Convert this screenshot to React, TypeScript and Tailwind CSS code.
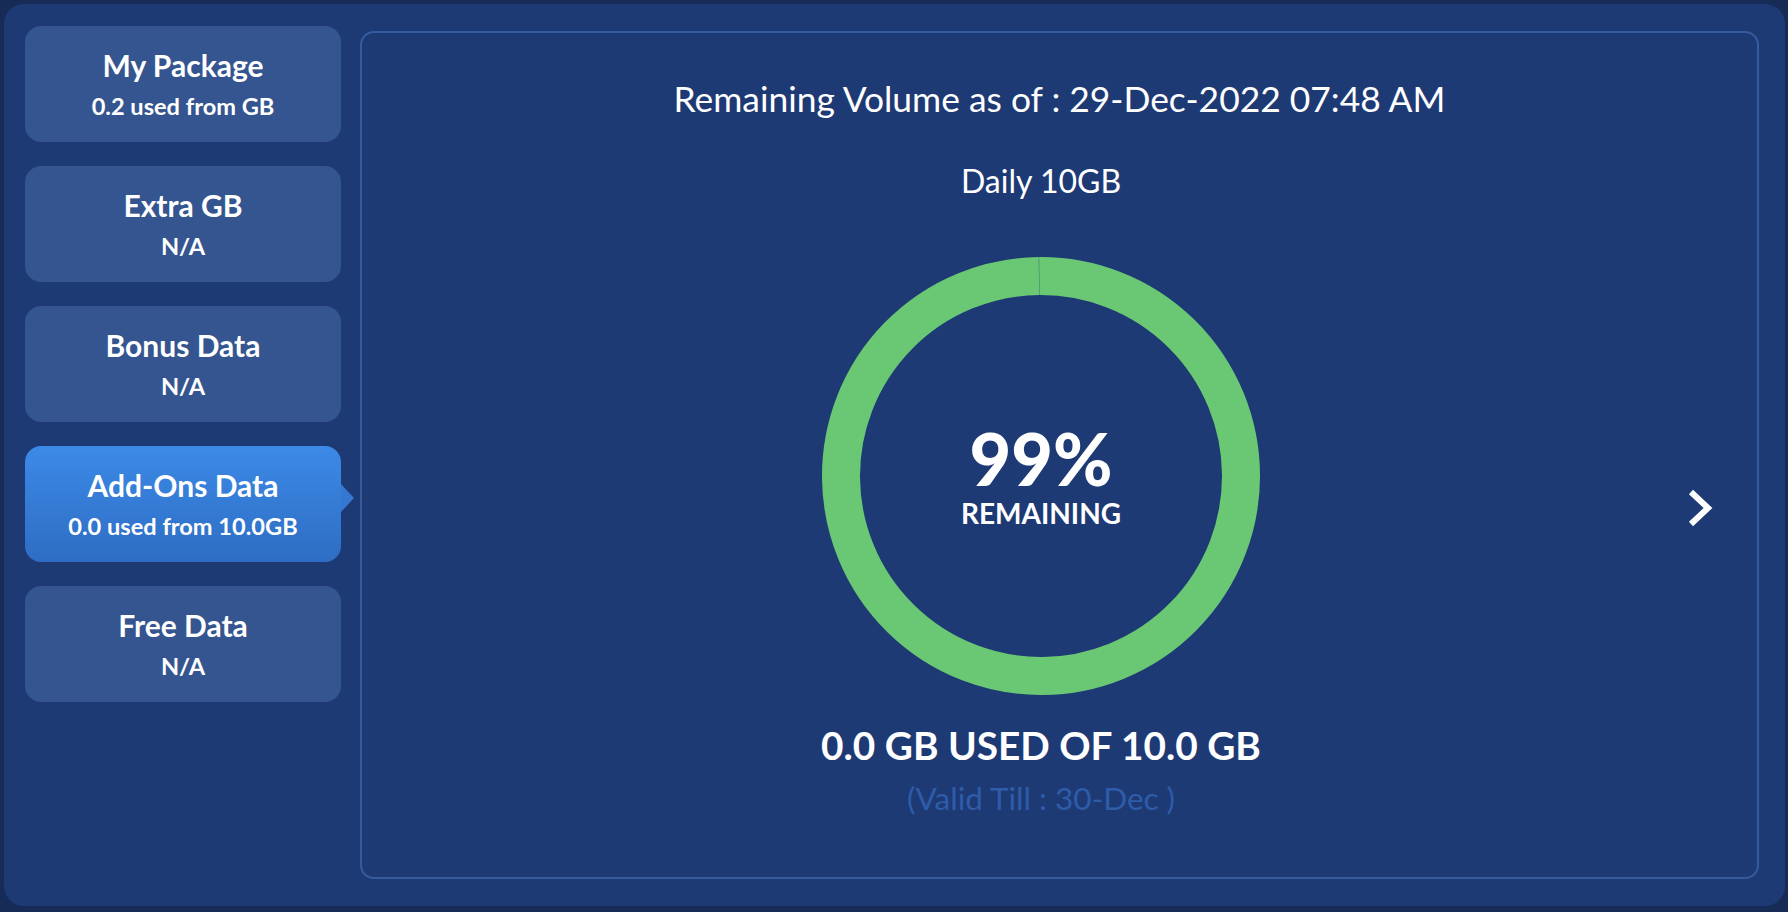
import React from "react";

type Tab = { title: string; sub: string; active?: boolean };

const tabs: Tab[] = [
  { title: "My Package", sub: "0.2 used from GB" },
  { title: "Extra GB", sub: "N/A" },
  { title: "Bonus Data", sub: "N/A" },
  { title: "Add-Ons Data", sub: "0.0 used from 10.0GB", active: true },
  { title: "Free Data", sub: "N/A" },
];

function TabCard({ t }: { t: Tab }) {
  return (
    <div
      className={
        t.active
          ? "relative h-[116px] rounded-[16px] bg-gradient-to-b from-[#3c8ae7] to-[#2e6dc3] flex flex-col items-center justify-center gap-[9px] text-white"
          : "relative h-[116px] rounded-[16px] bg-[#34558f] flex flex-col items-center justify-center gap-[9px] text-white"
      }
    >
      <div className="text-[30px] leading-[1.2] font-bold">{t.title}</div>
      <div className="text-[23.6px] leading-[1.2] font-bold">{t.sub}</div>
      {t.active && (
        <div className="absolute right-[-13px] top-[38px] w-0 h-0 border-y-[14px] border-y-transparent border-l-[13px] border-l-[#3478d1]" />
      )}
    </div>
  );
}

function Ring() {
  const r = 200;
  const c = 2 * Math.PI * r;
  return (
    <div className="relative w-[438px] h-[438px]">
      <svg width="438" height="438" viewBox="0 0 438 438" className="absolute inset-0">
        <circle
          cx="219"
          cy="219"
          r={r}
          fill="none"
          stroke="#6ac874"
          strokeWidth="38"
          strokeDasharray={`${c - 0.8} 0.8`}
          transform="rotate(-90.5 219 219)"
        />
      </svg>
      <div className="absolute inset-0 flex flex-col items-center justify-center gap-[4px] text-white">
        <div className="text-[72px] leading-none font-black">99%</div>
        <div className="text-[28px] leading-[1.1] font-bold">REMAINING</div>
      </div>
    </div>
  );
}

export default function App() {
  return (
    <div
      className="w-[1788px] h-[912px] bg-[#172b57] pt-[4px] pl-[4px] pr-[3px] pb-[6px]"
      style={{ fontFamily: "Lato, 'Open Sans', sans-serif" }}
    >
      <div className="w-full h-full rounded-[20px] bg-[#1e3a75] flex pt-[22px] pl-[21px] pr-[26px] pb-[27px] gap-[19px]">
        <div className="w-[316px] flex flex-col gap-[24px] shrink-0">
          {tabs.map((t) => (
            <TabCard key={t.title} t={t} />
          ))}
        </div>
        <div className="relative flex-1 mt-[5px] rounded-[14px] border-2 border-[#365b9d] flex flex-col">
          <div className="pt-[45px] text-center text-white text-[35.4px] leading-[1.2]">
            Remaining Volume as of : 29-Dec-2022 07:48 AM
          </div>
          <div className="pr-[37px] flex flex-col items-center">
            <div className="mt-[42px] text-white text-[32px] leading-[1.2]">Daily 10GB</div>
            <div className="mt-[56px]">
              <Ring />
            </div>
            <div className="mt-[27px] text-white text-[38.8px] leading-[1.2] font-bold">
              0.0 GB USED OF 10.0 GB
            </div>
            <div className="mt-[12px] text-[#2e5ca9] text-[31.5px] leading-[1.2]">
              (Valid Till : 30-Dec )
            </div>
          </div>
          <svg
            width="30"
            height="44"
            viewBox="0 0 30 44"
            className="absolute top-[453px] right-[42px]"
          >
            <polyline
              points="6,6 23,22 6,38"
              fill="none"
              stroke="#ffffff"
              strokeWidth="6"
              strokeLinejoin="miter"
            />
          </svg>
        </div>
      </div>
    </div>
  );
}
